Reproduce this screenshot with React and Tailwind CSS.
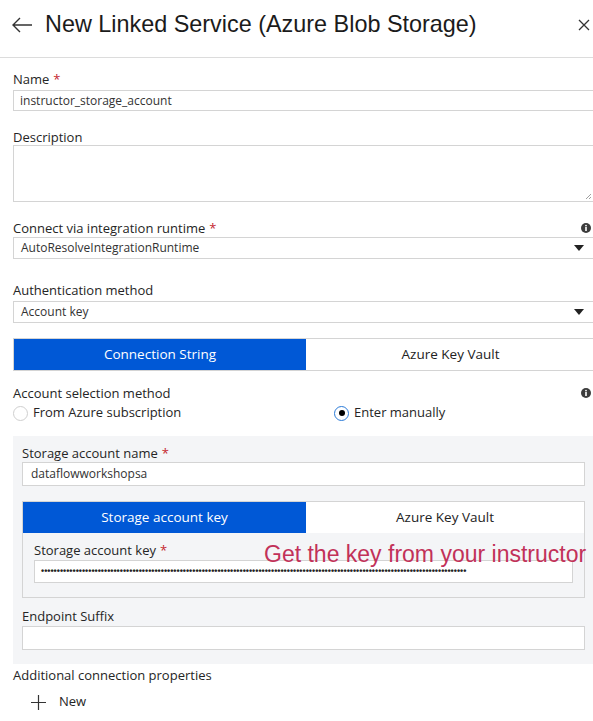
import React from 'react';

const FONT = { fontFamily: '"Open Sans", "Noto Sans", sans-serif' };

const Req = () => <span className="text-[#c4262e] ml-1">*</span>;

const Info = () => (
  <svg width="10" height="10" viewBox="0 0 10 10" className="shrink-0">
    <circle cx="5" cy="5" r="5" fill="#3c3c3c" />
    <circle cx="5" cy="2.6" r="0.9" fill="#fff" />
    <rect x="4.2" y="4" width="1.6" height="4" fill="#fff" />
  </svg>
);

const Caret = () => (
  <svg width="10" height="6" viewBox="0 0 10 6" className="shrink-0">
    <path d="M0 0 L10 0 L5 6 Z" fill="#222" />
  </svg>
);

const Label = ({ children, info, className = '' }) => (
  <div className={`flex items-center justify-between h-[18px] text-[13px] text-[#252525] leading-[18px] ${className}`}>
    <span>{children}</span>
    {info && <span className="pr-[1px]"><Info /></span>}
  </div>
);

const Select = ({ value, className = '' }) => (
  <div className={`h-[22px] border border-[#d4d4d4] flex items-center justify-between pl-[7px] pr-[11px] text-[12px] text-[#333] ${className}`}>
    <span>{value}</span>
    <Caret />
  </div>
);

const Radio = ({ checked, label }) => (
  <div className="flex items-center gap-[5px]">
    {checked ? (
      <span className="w-[15px] h-[15px] rounded-full border border-[#2b7bd8] flex items-center justify-center bg-white">
        <span className="w-[6px] h-[6px] rounded-full bg-black" />
      </span>
    ) : (
      <span className="w-[15px] h-[15px] rounded-full border border-[#cfcfcf] bg-white" />
    )}
    <span>{label}</span>
  </div>
);

export default function App() {
  return (
    <div className="w-[593px] h-[721px] overflow-hidden bg-white text-[#252525]" style={FONT}>
      {/* header */}
      <div className="h-[58px] border-b border-[#dcdcdc] flex items-center pl-[12px] pb-[8px] w-[600px]">
        <svg width="21" height="16" viewBox="0 0 21 16" className="shrink-0">
          <path d="M8 1 L1 8 L8 15 M1 8 H20" fill="none" stroke="#333" strokeWidth="1.4" />
        </svg>
        <h1 className="ml-[12px] text-[23.4px] text-[#1b1b1b] font-normal whitespace-nowrap" style={{ fontFamily: '"Liberation Sans", Arial, sans-serif' }}>
          New Linked Service (Azure Blob Storage)
        </h1>
        <svg width="12" height="12" viewBox="0 0 12 12" className="ml-auto mr-[10px] shrink-0">
          <path d="M1 1 L11 11 M11 1 L1 11" fill="none" stroke="#333" strokeWidth="1.3" />
        </svg>
      </div>

      <div className="pl-[13px] w-[596px]">
        <Label className="mt-[12px]">Name<Req /></Label>
        <div className="mt-[2px] h-[21px] border border-[#d4d4d4] flex items-center pl-[6px] text-[12px] text-[#333]">
          instructor_storage_account
        </div>

        <Label className="mt-[17px]">Description</Label>
        <div className="-mt-px h-[57px] border border-[#d4d4d4] relative">
          <svg width="6" height="6" viewBox="0 0 6 6" className="absolute right-[4px] bottom-[2px]">
            <path d="M6 1 L1 6 M6 4 L4 6" stroke="#888" strokeWidth="0.8" />
          </svg>
        </div>

        <Label className="mt-[17px] pr-[4px]" info>Connect via integration runtime<Req /></Label>
        <Select value="AutoResolveIntegrationRuntime" />

        <Label className="mt-[22px]">Authentication method</Label>
        <Select className="mt-[2px]" value="Account key" />

        <div className="mt-[15px] flex h-[33px] border border-[#d4d4d4] text-[13.5px]">
          <div className="w-[292px] bg-[#0058d6] text-white flex items-center justify-center">Connection String</div>
          <div className="flex-1 bg-white text-[#222] flex items-center justify-center">Azure Key Vault</div>
        </div>

        <Label className="mt-[13px] pr-[4px]" info>Account selection method</Label>
        <div className="mt-[1px] flex items-center text-[13px] h-[20px]">
          <div className="w-[321px]"><Radio label="From Azure subscription" /></div>
          <Radio checked label="Enter manually" />
        </div>

        {/* gray panel */}
        <div className="mt-[13px] bg-[#f4f5f7] pl-[9px] pr-[11px] pt-[8px] pb-[14px]">
          <Label>Storage account name<Req /></Label>
          <div className="h-[24px] border border-[#d4d4d4] bg-white flex items-center pl-[8px] text-[12px] text-[#333]">
            dataflowworkshopsa
          </div>

          <div className="mt-[15px] border border-[#d4d4d4]">
            <div className="flex h-[31px] text-[13.5px]">
              <div className="w-[283px] bg-[#0058d6] text-white flex items-center justify-center">Storage account key</div>
              <div className="flex-1 bg-white text-[#222] flex items-center justify-center">Azure Key Vault</div>
            </div>
            <div className="relative px-[11px] pt-[8px] pb-[14px]">
              <Label>Storage account key<Req /></Label>
              <div className="mt-[1px] h-[23px] border border-[#d4d4d4] bg-white flex items-center pl-[6px] overflow-hidden">
                <span className="text-[9px] leading-none font-bold text-[#222] whitespace-nowrap" style={{ fontFamily: '"Liberation Sans", sans-serif' }}>
                  {'•'.repeat(135)}
                </span>
              </div>
              <div className="absolute left-[241px] top-[7px] text-[23px] leading-[28px] text-[#c23159] whitespace-nowrap" style={{ fontFamily: '"Liberation Sans", Arial, sans-serif' }}>
                Get the key from your instructor
              </div>
            </div>
          </div>

          <Label className="mt-[9px]">Endpoint Suffix</Label>
          <div className="mt-[1px] h-[24px] border border-[#d4d4d4] bg-white" />
        </div>

        <Label className="mt-[2px]">Additional connection properties</Label>
        <div className="mt-[9px] flex items-center pl-[18px] text-[13px] h-[18px]">
          <svg width="15" height="15" viewBox="0 0 15 15">
            <path d="M7.5 0 V15 M0 7.5 H15" stroke="#333" strokeWidth="1.2" />
          </svg>
          <span className="ml-[13px]">New</span>
        </div>
      </div>
    </div>
  );
}
